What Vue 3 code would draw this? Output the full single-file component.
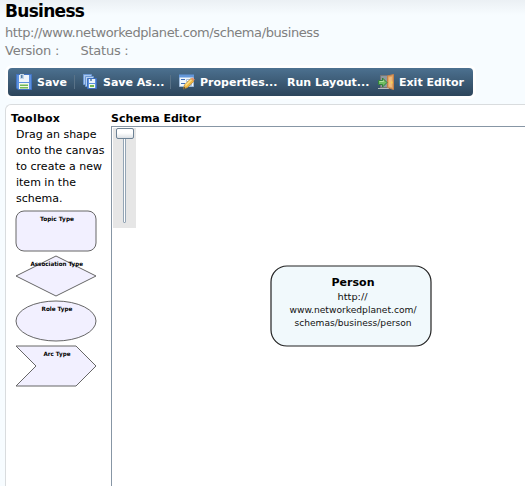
<script setup>
const description = ['Drag an shape', 'onto the canvas', 'to create a new', 'item in the', 'schema.']
const shapes = [
  { kind: 'topic', label: 'Topic Type', x: 25, w: 34 },
  { kind: 'association', label: 'Association Type', x: 15.5, w: 52.5 },
  { kind: 'role', label: 'Role Type', x: 26.5, w: 31 },
  { kind: 'arc', label: 'Arc Type', x: 28.5, w: 27 },
]
</script>

<template>
  <div class="page">
    <header class="head">
      <h1>Business</h1>
      <div class="url">http://www.networkedplanet.com/schema/business</div>
      <div class="meta"><span class="version">Version :</span><span>Status :</span></div>
    </header>

    <nav class="toolbar">
      <button class="save">
        <svg width="16" height="16" viewBox="0 0 16 16">
          <path d="M.5.500h15v15H2l-1.500-1.500z" fill="#5d91df" stroke="#4274c2" />
          <path d="M3 1h10v7H3z" fill="#eef5fb" />
          <path d="M4 0h4v5H4z" fill="#c4d7e7" /><path d="M5 1h1.500v3H5z" fill="#5580ac" />
          <path d="M3 9h10v6H3z" fill="#f4fae9" />
          <path d="M4 10.500h8v1.500H4zM4 13h8v1.500H4z" fill="#72b957" />
        </svg>
        <span>Save</span>
      </button>
      <i class="sep"></i>
      <button class="save-as">
        <svg width="16" height="16" viewBox="0 0 16 16">
          <path d="M1.500.5h8v10h-8z" fill="#a9c8ee" stroke="#6c98d4" />
          <path d="M3.500 2.500h8v10h-8z" fill="#b9d3f1" stroke="#6c98d4" />
          <path d="M5.500 4.500h9v10h-9z" fill="#5d91df" stroke="#3e6fbd" />
          <path d="M7 5h6v4H7z" fill="#edf5fb" /><path d="M8 5h2v2H8z" fill="#7598bd" />
          <path d="M7 10h6v4H7z" fill="#f4fae9" /><path d="M8 11h4v2H8z" fill="#72b957" />
        </svg>
        <span>Save As...</span>
      </button>
      <i class="sep"></i>
      <button class="properties">
        <svg width="16" height="16" viewBox="0 0 16 16">
          <path d="M.5 1.500h14v11H.5z" fill="#f2f7fc" stroke="#a1bddd" />
          <path d="M0 .5h15v3H0z" fill="#6397da" />
          <path d="M2 5.500h4M2 9.500h4" stroke="#416fb8" />
          <path d="M7.500 5.500h6v2h-6zM7.500 9.500h5v2h-5z" fill="#fff" stroke="#a9bfd5" />
          <path d="M4.500 15l1-4.200 6.500-6.300 3 2.700-6.500 6.300z" fill="#f2b944" stroke="#b88a43" stroke-width=".8" />
          <path d="M6.500 11.500l6-5.800" stroke="#ffe38a" stroke-width="1.400" />
          <path d="M12 4.500l1.400-1.100 2.300 2.200-.9 1.500z" fill="#e99169" />
          <path d="M4.500 15l.6-2 1.500 1.300z" fill="#40352d" />
        </svg>
        <span>Properties...</span>
      </button>
      <button class="layout"><span>Run Layout...</span></button>
      <button class="exit">
        <svg width="17" height="16" viewBox="0 0 17 16">
          <path d="M2.500 1.500h8v12h-8z" fill="#8e989f" stroke="#777" />
          <path d="M0 14.500h11" stroke="#b6babb" />
          <path d="M9.500 2L15.500.5v15l-6-2z" fill="#dda060" stroke="#c58049" />
          <path d="M10.800 3.500l3-.8v10.600l-3-.8z" fill="#efbc7c" />
          <path d="M13 7.500h1.500v2H13z" fill="#f7d34f" />
          <path d="M.5 6.500h4v-2.500l4.500 4.500-4.500 4.500v-2.500h-4z" fill="#71bd63" stroke="#32813b" />
          <path d="M1.500 7.500h4v-1" fill="none" stroke="#b2e3a0" />
        </svg>
        <span>Exit Editor</span>
      </button>
    </nav>

    <main class="panel">
      <aside class="toolbox">
        <h2>Toolbox</h2>
        <p><span v-for="line in description" :key="line">{{ line }}</span></p>
        <svg v-for="s in shapes" :key="s.kind" class="shape" width="82" height="42" viewBox="0 0 82 42">
          <rect v-if="s.kind === 'topic'" x="1" y="1" width="80" height="40" rx="8" />
          <path v-else-if="s.kind === 'association'" d="M1 21L41 1l40 20-40 20z" />
          <ellipse v-else-if="s.kind === 'role'" cx="41" cy="21" rx="40" ry="20" />
          <path v-else d="M1 1h60l20 20-20 20H1l20-20z" />
          <text :x="s.x" y="11" :textLength="s.w" lengthAdjust="spacingAndGlyphs">{{ s.label }}</text>
        </svg>
      </aside>

      <section class="editor">
        <h2>Schema Editor</h2>
        <div class="canvas">
          <div class="zoom"><div class="track"></div><div class="thumb"></div></div>
          <svg class="node" width="162" height="82" viewBox="0 0 162 82">
            <rect x="1" y="1" width="160" height="80" rx="16" />
            <text class="name" x="61.500" y="21" textLength="43" lengthAdjust="spacingAndGlyphs">Person</text>
            <text x="67.500" y="35" textLength="30" lengthAdjust="spacingAndGlyphs">http://</text>
            <text x="19.500" y="48" textLength="127" lengthAdjust="spacingAndGlyphs">www.networkedplanet.com/</text>
            <text x="24.500" y="61" textLength="117" lengthAdjust="spacingAndGlyphs">schemas/business/person</text>
          </svg>
        </div>
      </section>
    </main>
  </div>
</template>

<style>
body { margin: 0; overflow: hidden; }
</style>

<style scoped>
.page {
  box-sizing: border-box;
  width: 525px;
  height: 486px;
  overflow: hidden;
  display: flex;
  flex-direction: column;
  background: linear-gradient(#ebf0f4, #f7fcff 15px);
  font-family: Verdana, "DejaVu Sans", sans-serif;
  color: #000;
}
.head { height: 65px; padding-left: 5px; box-sizing: border-box; white-space: nowrap; color: #808080; }
h1 { margin: 0; color: #000; font-size: 17px; line-height: 22px; letter-spacing: -.7px; }
.url { font-size: 13px; line-height: 20px; margin-top: 1px; letter-spacing: -.4px; }
.meta { display: flex; font-size: 13px; line-height: 16px; letter-spacing: -.25px; }
.version { width: 75.5px; }
.toolbar {
  display: flex;
  align-items: center;
  box-sizing: border-box;
  width: 465px;
  height: 28px;
  flex: none;
  margin: 3px 0 8px 8px;
  padding-left: 8px;
  border-radius: 4px;
  background: linear-gradient(#4c7190, #2d455b);
  box-shadow: 0 0 0 3px #fff;
}
button {
  display: flex;
  align-items: center;
  flex: none;
  padding: 0;
  border: 0;
  background: none;
  color: #fff;
  font: bold 11px/16px Verdana, "DejaVu Sans", sans-serif;
  white-space: nowrap;
}
button svg { flex: none; margin-right: 5px; }
button span { padding-top: 2px; }
.save { width: 58px; }
.save-as { width: 88px; }
.properties { width: 108px; }
.properties svg { margin-left: 1px; }
.layout { width: 92px; padding-left: 1px; }
.exit svg { margin-right: 4px; }
.sep { width: 1px; height: 14px; background: #597287; margin-right: 7px; }
.panel {
  display: flex;
  box-sizing: border-box;
  flex: 1;
  margin-left: 5px;
  border: solid #d9dcde;
  border-width: 1px 0 0 1px;
  border-radius: 6px 0 0;
  background: #fff;
}
h2 { margin: 0; font-size: 11px; line-height: 14px; white-space: nowrap; }
.toolbox { width: 105px; padding-top: 7px; }
.toolbox h2 { padding-left: 5px; letter-spacing: .25px; }
.toolbox p { margin: 1px 0 3px 10px; font-size: 11px; line-height: 16px; }
.toolbox p span { display: block; white-space: nowrap; }
.shape { display: block; margin: 0 0 3px 9px; fill: #f2f0ff; stroke: #666; stroke-width: 1; }
.shape text { fill: #000; stroke: none; font-size: 6px; font-weight: bold; }
.editor { flex: 1; display: flex; flex-direction: column; padding-top: 7px; }
.canvas { position: relative; flex: 1; border: solid #8796a5; border-width: 1px 0 0 1px; }
.zoom {
  display: grid;
  justify-items: center;
  width: 23px;
  height: 100px;
  margin: 1px 0 0 1px;
  background: #e6e6e6;
}
.track, .thumb { grid-area: 1 / 1; box-sizing: border-box; }
.track { width: 3px; height: 91px; margin-top: 4px; border: 1px solid #94a5b5; border-radius: 1px; background: #fff; }
.thumb { width: 18px; height: 11px; border: 1px solid #6d8295; border-radius: 2px; background: linear-gradient(#fff 45%, #dce0e4); }
.node { position: absolute; left: 158px; top: 138px; fill: #f1f9fc; stroke: #222; stroke-width: 1.2; }
.node text { fill: #111; stroke: none; font-size: 9px; }
.node .name { fill: #000; font-size: 11px; font-weight: bold; }
</style>
